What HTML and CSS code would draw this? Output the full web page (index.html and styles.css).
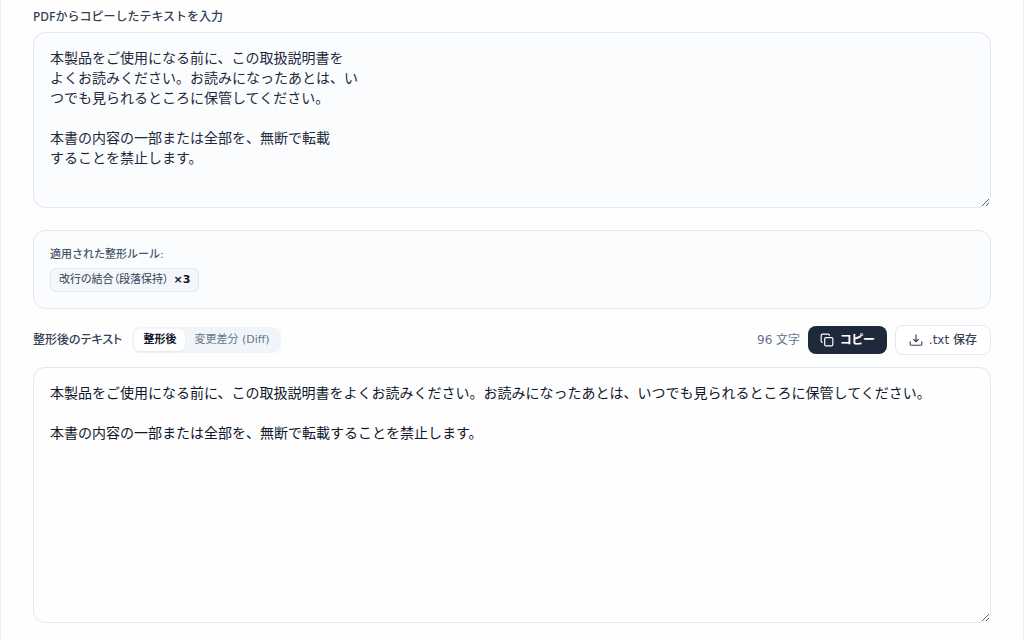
FILE: index.html
```html
<!DOCTYPE html>
<html lang="ja">
  <head>
    <meta charset="UTF-8" />
    <meta name="viewport" content="width=device-width, initial-scale=1.0" />
    <title>PDFテキスト整形</title>
    <link rel="stylesheet" href="styles.css">
  </head>
  <body>
    <main class="panel">
      <label class="label" for="inputText">PDFからコピーしたテキストを入力</label>
      <textarea class="textbox input" id="inputText">本製品をご使用になる前に、この取扱説明書を
よくお読みください。お読みになったあとは、い
つでも見られるところに保管してください。

本書の内容の一部または全部を、無断で転載
することを禁止します。</textarea>

      <section class="rules">
        <p class="rules-title">適用された整形ルール:</p>
        <span class="rule">改行の結合（段落保持） <b>×3</b></span>
      </section>

      <div class="toolbar">
        <label class="label" for="outputText">整形後のテキスト</label>
        <div class="tabs">
          <button type="button" class="tab active">整形後</button>
          <button type="button" class="tab">変更差分 (Diff)</button>
        </div>
        <span class="count">96 文字</span>
        <button type="button" class="btn copy">
          <svg class="icon" viewBox="0 0 24 24"><rect x="8" y="8" width="14" height="14" rx="2"/><path d="M4 16c-1.1 0-2-.9-2-2V4c0-1.1.9-2 2-2h10c1.1 0 2 .9 2 2"/></svg>
          コピー
        </button>
        <button type="button" class="btn save">
          <svg class="icon" viewBox="0 0 24 24"><path d="M12 3v12M8 11l4 4 4-4M2 15v4a2 2 0 0 0 2 2h16a2 2 0 0 0 2-2v-4"/></svg>
          .txt 保存
        </button>
      </div>
      <textarea class="textbox output" id="outputText" readonly>本製品をご使用になる前に、この取扱説明書をよくお読みください。お読みになったあとは、いつでも見られるところに保管してください。

本書の内容の一部または全部を、無断で転載することを禁止します。</textarea>
    </main>
  </body>
</html>
```
FILE: styles.css
```css
* {
  box-sizing: border-box;
}
body {
  margin: 0;
  background-color: #fefefe;
  color: #334155;
  font-family: "DejaVu Sans", "Noto Sans CJK JP", sans-serif;
}
button, textarea {
  font-family: inherit;
}
/* 外枠 */
.panel {
  display: flex;
  flex-direction: column;
  min-height: 100vh;
  padding: 8px 32px 16px;
  border: solid #e8ebef;
  border-width: 0 1px;
}
.label {
  font-family: "Noto Sans", "Noto Sans CJK JP", sans-serif;
  font-size: 12px;
  line-height: 18px;
  font-weight: 500;
}
/* テキスト入力・結果 */
.textbox {
  display: block;
  width: 100%;
  padding: 15px 16px;
  border: 1px solid #e2e8f0;
  border-radius: 12px;
  font-size: 14px;
  line-height: 20px;
  resize: vertical;
  outline: none;
}
.input {
  height: 176px;
  margin-top: 6px;
  background-color: #fafcfe;
  color: #1e293b;
}
.output {
  height: 256px;
  margin-top: 12px;
  background-color: #fefefe;
  color: #0f172a;
}
/* 適用ルール */
.rules {
  margin-top: 22px;
  padding: 16px;
  border: 1px solid #e2e8f0;
  border-radius: 12px;
  background-color: #fafcfe;
  font-size: 11px;
  line-height: 16px;
}
.rules-title {
  margin: 0 0 5px;
  color: #475569;
  font-weight: 500;
}
.rule {
  display: inline-flex;
  gap: 5px;
  padding: 3px 8px;
  border: 1px solid #e2e8f0;
  border-radius: 6px;
  background-color: #f3f6fa;
  font-feature-settings: "palt";
}
.rule b {
  color: #0f172a;
  font-weight: 600;
}
/* 結果の操作 */
.toolbar {
  display: flex;
  align-items: center;
  gap: 8px;
  margin-top: 16px;
}
.toolbar .label {
  font-feature-settings: "palt";
}
.tabs {
  display: flex;
  margin-left: 2px;
  padding: 2px;
  border-radius: 8px;
  background-color: #f1f5f9;
}
.tab {
  padding: 3px 9px;
  border: none;
  border-radius: 6px;
  background: none;
  color: #64748b;
  font-size: 11px;
  line-height: 16px;
  cursor: pointer;
}
.tab.active {
  background-color: #fff;
  color: #0f172a;
  font-weight: 600;
  box-shadow: 0 1px 2px rgba(0, 0, 0, 0.05);
}
.count {
  margin-left: auto;
  color: #64748b;
  font-size: 12px;
  line-height: 16px;
}
.btn {
  display: flex;
  align-items: center;
  gap: 6px;
  padding: 6px 12px;
  border: none;
  border-radius: 8px;
  font-size: 12px;
  line-height: 16px;
  font-weight: 500;
  cursor: pointer;
}
.copy {
  background-color: #1e293b;
  color: #fff;
  font-weight: 600;
  font-feature-settings: "palt";
}
.save {
  padding: 6px 13px;
  border: 1px solid #e2e8f0;
  background-color: #fff;
  color: #334155;
}
.icon {
  width: 14px;
  height: 14px;
  fill: none;
  stroke: currentColor;
  stroke-width: 2;
  stroke-linecap: round;
  stroke-linejoin: round;
}
```
